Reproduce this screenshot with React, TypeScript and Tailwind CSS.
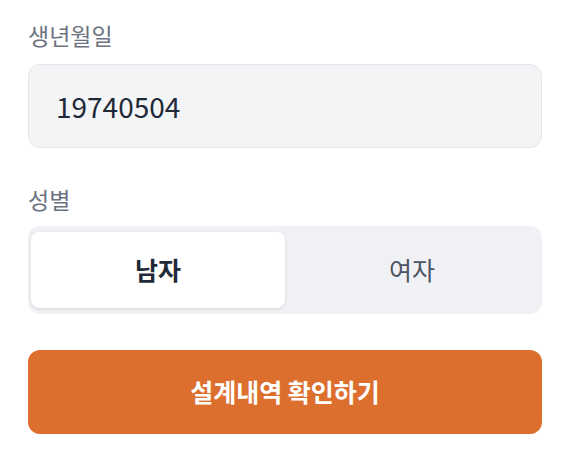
import { useState } from 'react';

const font = { fontFamily: '"Noto Sans CJK KR", "Noto Sans", sans-serif' };

export default function App() {
  const [birth, setBirth] = useState('19740504');
  const [gender, setGender] = useState<'M' | 'F'>('M');

  const on = 'flex-1 rounded-[8px] bg-white shadow-[0_1px_3px_rgba(0,0,0,0.12)] text-[25px] font-bold text-[#1f2937]';
  const off = 'flex-1 rounded-[8px] text-[25px] text-[#4b5563]';

  return (
    <div className="w-[562px] h-[454px] bg-white pl-[28px] pr-[20px] pt-[19px]" style={font}>
      <label className="block text-[23px] leading-[32px] text-[#6b7280]">생년월일</label>
      <input
        value={birth}
        onChange={(e) => setBirth(e.target.value)}
        className="mt-[13px] w-full h-[84px] rounded-[12px] border border-[#e5e7eb] bg-[#f3f4f6] px-[27px] text-[28px] text-[#1f2937] outline-none"
        style={font}
      />

      <label className="block mt-[35px] text-[23px] leading-[32px] text-[#6b7280]">성별</label>
      <div className="mt-[11px] flex h-[88px] rounded-[12px] bg-[#f0f1f5] px-[3px] py-[6px]">
        <button onClick={() => setGender('M')} className={gender === 'M' ? on : off}>
          남자
        </button>
        <button onClick={() => setGender('F')} className={gender === 'F' ? on : off}>
          여자
        </button>
      </div>

      <button className="mt-[36px] w-full h-[84px] rounded-[12px] bg-[#dc6f2e] text-[25px] font-bold text-white">
        설계내역 확인하기
      </button>
    </div>
  );
}
